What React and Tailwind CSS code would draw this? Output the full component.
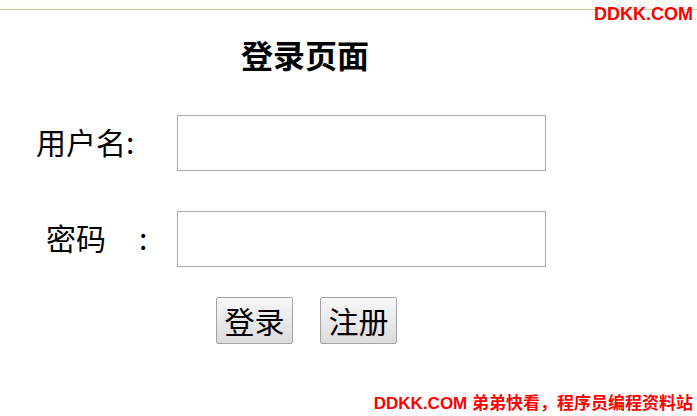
import React from 'react';

const cjk = { fontFamily: '"Noto Sans CJK SC", "Noto Sans", sans-serif' };
const mark = { fontFamily: '"Liberation Sans", "Noto Sans CJK SC", sans-serif' };

export default function App() {
    return (
        <div className="relative w-[697px] h-[416px] bg-white overflow-hidden text-black" style={cjk}>
            {/* top strip */}
            <div className="h-[10px] bg-[#fffdf7] border-b border-[#d5cba1]" />

            {/* watermark top */}
            <div className="absolute top-[2px] right-[4px] text-[18px] font-bold text-[#ff0000] leading-[24px]" style={mark}>
                DDKK.COM
            </div>

            <div className="w-[610px]">
                <h2 className="mt-[28px] text-center text-[32px] font-bold leading-[32px]">登录页面</h2>

                {/* username */}
                <div className="mt-[45px] flex items-center">
                    <div className="w-[177px] pl-[36px] pb-[4px] text-[30px] leading-[40px]">用户名:</div>
                    <input className="w-[369px] h-[56px] border border-[#a9a9a9] bg-white outline-none" />
                </div>

                {/* password */}
                <div className="mt-[40px] flex items-center">
                    <div className="w-[177px] pl-[46px] pb-[4px] text-[30px] leading-[40px]">
                        <span>密码</span>
                        <span className="ml-[33px]">:</span>
                    </div>
                    <input type="password" className="w-[369px] h-[56px] border border-[#a9a9a9] bg-white outline-none" />
                </div>

                {/* buttons */}
                <div className="mt-[30px] flex gap-[27px] pl-[216px]">
                    <button className="w-[77px] h-[47px] pb-[2px] border border-[#a3a3a3] rounded-[2px] bg-linear-to-b from-[#f7f7f7] to-[#dcdcdc] text-[30px] leading-[40px]">
                        登录
                    </button>
                    <button className="w-[77px] h-[47px] pb-[2px] border border-[#a3a3a3] rounded-[2px] bg-linear-to-b from-[#f7f7f7] to-[#dcdcdc] text-[30px] leading-[40px]">
                        注册
                    </button>
                </div>
            </div>

            {/* watermark bottom */}
            <div className="absolute bottom-[1px] right-[4px] text-[17px] font-bold text-[#ff0000] leading-[22px]" style={mark}>
                DDKK.COM 弟弟快看，程序员编程资料站
            </div>
        </div>
    );
}
